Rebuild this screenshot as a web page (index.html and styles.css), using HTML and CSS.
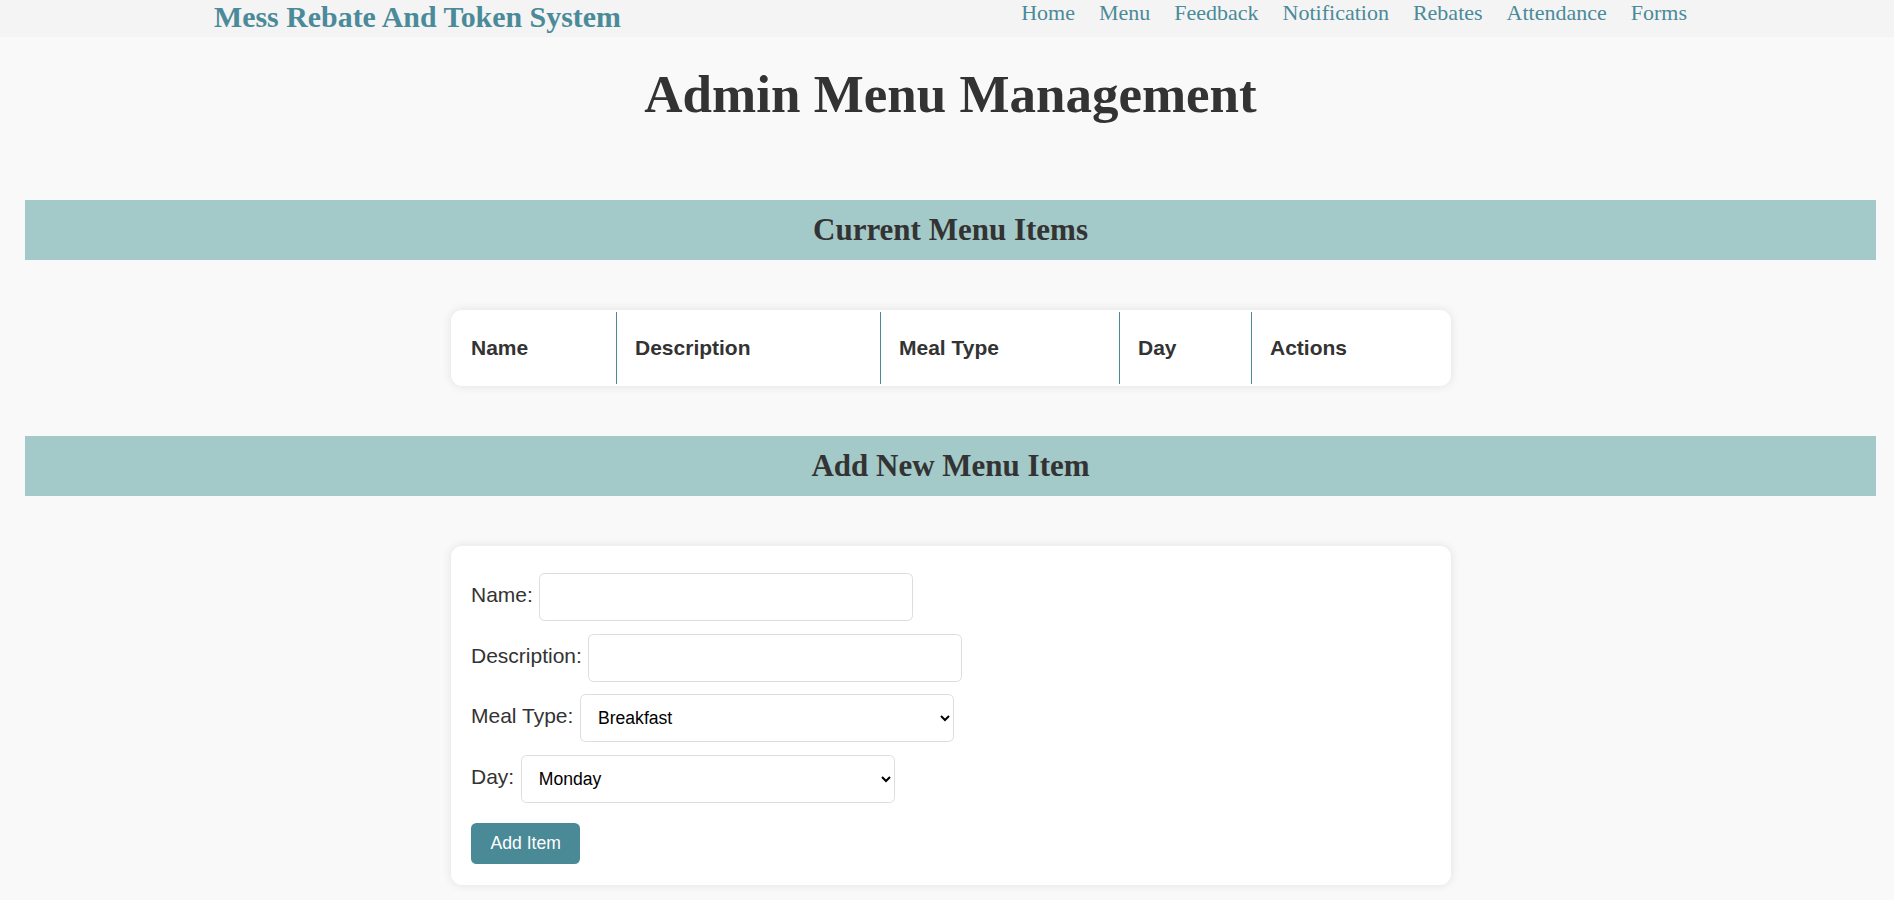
FILE: index.html
```html
<!DOCTYPE html>
<html lang="en">
<head>
<meta charset="utf-8">
<title>Admin Menu Management</title>
<link rel="stylesheet" href="styles.css">
</head>
<body>
<nav class="topbar">
  <div class="brand">Mess Rebate And Token System</div>
  <ul class="nav-links">
    <li><a href="#">Home</a></li>
    <li><a href="#">Menu</a></li>
    <li><a href="#">Feedback</a></li>
    <li><a href="#">Notification</a></li>
    <li><a href="#">Rebates</a></li>
    <li><a href="#">Attendance</a></li>
    <li><a href="#">Forms</a></li>
  </ul>
</nav>

<h1 class="page-title">Admin Menu Management</h1>

<h2 class="section-bar">Current Menu Items</h2>

<div class="card table-card">
  <table class="menu-table">
    <thead>
      <tr>
        <th class="c-name">Name</th>
        <th class="c-desc">Description</th>
        <th class="c-meal">Meal Type</th>
        <th class="c-day">Day</th>
        <th class="c-act">Actions</th>
      </tr>
    </thead>
    <tbody></tbody>
  </table>
</div>

<h2 class="section-bar">Add New Menu Item</h2>

<div class="card form-card">
  <form class="menu-form">
    <div class="form-row">
      <label for="name">Name:</label>
      <input id="name" type="text" class="field">
    </div>
    <div class="form-row">
      <label for="desc">Description:</label>
      <input id="desc" type="text" class="field">
    </div>
    <div class="form-row">
      <label for="meal">Meal Type:</label>
      <select id="meal" class="field">
        <option>Breakfast</option>
        <option>Lunch</option>
        <option>Dinner</option>
      </select>
    </div>
    <div class="form-row">
      <label for="day">Day:</label>
      <select id="day" class="field">
        <option>Monday</option>
        <option>Tuesday</option>
        <option>Wednesday</option>
        <option>Thursday</option>
        <option>Friday</option>
        <option>Saturday</option>
        <option>Sunday</option>
      </select>
    </div>
    <div class="form-actions">
      <button type="button" class="btn">Add Item</button>
    </div>
  </form>
</div>
</body>
</html>
```

FILE: styles.css
```css
* { box-sizing: border-box; }

body {
  margin: 0;
  background: #f9f9f9;
  color: #333;
  font-family: "Liberation Sans", Arial, sans-serif;
}

.topbar {
  height: 37px;
  background: #f4f4f4;
  display: flex;
  justify-content: space-between;
  align-items: flex-start;
  padding: 0 207px 0 214px;
}

.brand {
  font-family: "Liberation Serif", "Times New Roman", serif;
  font-weight: bold;
  font-size: 29.9px;
  line-height: 33px;
  color: #4a8a99;
}

.nav-links {
  list-style: none;
  margin: 2px 0 0;
  padding: 0;
  display: flex;
  gap: 24px;
}

.nav-links a {
  font-family: "Liberation Serif", "Times New Roman", serif;
  font-size: 22px;
  line-height: 22px;
  color: #4a8a99;
  text-decoration: none;
}

.page-title {
  margin: 27px 18px 0 25px;
  text-align: center;
  font-family: "Liberation Serif", "Times New Roman", serif;
  font-weight: bold;
  font-size: 53px;
  line-height: 61px;
  color: #333;
}

.section-bar {
  margin: 75px 18px 0 25px;
  height: 60px;
  background: #a3c9c9;
  text-align: center;
  font-family: "Liberation Serif", "Times New Roman", serif;
  font-weight: bold;
  font-size: 31px;
  line-height: 60px;
  color: #333;
}

.card {
  width: 1000px;
  margin: 50px 0 0 451px;
  background: #fff;
  border-radius: 11px;
  box-shadow: 0 0 10px rgba(0, 0, 0, 0.1);
}

.table-card + .section-bar { margin-top: 50px; }

.menu-table {
  width: 100%;
  table-layout: fixed;
  border-collapse: separate;
  border-spacing: 2px;
}

.menu-table th {
  height: 72px;
  padding: 0 18px;
  text-align: left;
  vertical-align: middle;
  font-size: 21px;
  font-weight: bold;
  color: #333;
  border-left: 1px solid #4a8a99;
}

.menu-table th.c-name { border-left: none; width: 161px; }
.menu-table th.c-desc { width: 262px; }
.menu-table th.c-meal { width: 237px; }
.menu-table th.c-day { width: 130px; }
.menu-table th.c-act { width: 198px; }

.form-card { margin-bottom: 20px; }

.menu-form {
  display: flex;
  flex-direction: column;
  gap: 12.7px;
  padding: 27px 20px 21px;
}

.form-row {
  display: flex;
  align-items: center;
  gap: 6.6px;
}

.form-row label {
  font-size: 21px;
  color: #333;
  padding-bottom: 4px;
}

.field {
  width: 374px;
  height: 48px;
  padding: 0 13px;
  border: 1px solid #ddd;
  border-radius: 5.5px;
  background: #fff;
  font-family: "Liberation Sans", Arial, sans-serif;
  font-size: 17.6px;
  color: #000;
}

.form-actions { margin-top: 7.3px; }

.btn {
  height: 41px;
  padding: 0 19.5px;
  border: none;
  border-radius: 5.5px;
  background: #4a8996;
  color: #fff;
  font-family: "Liberation Sans", Arial, sans-serif;
  font-size: 17.6px;
}
```
